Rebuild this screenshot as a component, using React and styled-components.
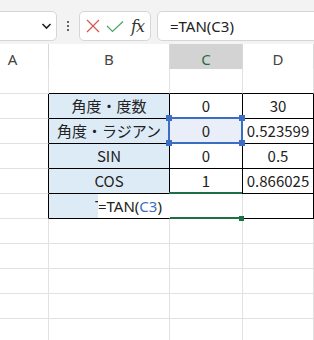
import React from "react";
import styled, { createGlobalStyle } from "styled-components";

const GlobalStyle = createGlobalStyle`
  html, body {
    margin: 0;
    padding: 0;
    background: #ffffff;
    overflow: hidden;
  }
  body {
    font-family: "Noto Sans CJK JP", "Noto Sans", sans-serif;
  }
`;

const COLS = [49, 121, 73, 71];

const Toolbar = styled.div`
  height: 44px;
  background: #f3f3f3;
  display: flex;
  align-items: flex-start;
  padding-top: 11px;
  box-sizing: border-box;
`;

const NameBox = styled.div`
  width: 62px;
  height: 30px;
  margin-left: -5px;
  box-sizing: border-box;
  background: #fff;
  border: 1px solid #d6d6d6;
  border-radius: 5px;
  display: flex;
  align-items: center;
  justify-content: flex-end;
  padding-right: 4px;
`;

const Dots = styled.div`
  width: 22px;
  height: 30px;
  display: flex;
  flex-direction: column;
  align-items: center;
  justify-content: center;
  gap: 2px;
  span {
    width: 2px;
    height: 2px;
    background: #333;
    border-radius: 1px;
  }
`;

const FxBox = styled.div`
  width: 72px;
  height: 30px;
  box-sizing: border-box;
  background: #fff;
  border: 1px solid #d6d6d6;
  border-radius: 5px;
  display: flex;
  align-items: center;
  padding-left: 5px;
  gap: 5px;
`;

const FxLabel = styled.span`
  font-family: "DejaVu Serif", "Liberation Serif", serif;
  font-style: italic;
  font-size: 16px;
  color: #333;
  margin-left: 2px;
  letter-spacing: -1px;
`;

const FormulaBox = styled.div`
  flex: 1;
  height: 30px;
  margin-left: 6px;
  margin-right: -10px;
  box-sizing: border-box;
  background: #fff;
  border: 1px solid #d6d6d6;
  border-radius: 5px;
  display: flex;
  align-items: center;
  padding-left: 12px;
  font-family: "Noto Sans", sans-serif;
  font-size: 15px;
  color: #222;
`;

const Sheet = styled.div`
  display: grid;
  grid-template-columns: ${COLS.map((c) => c + "px").join(" ")};
  grid-auto-rows: 25px;
`;

const Head = styled.div`
  height: 30px;
  box-sizing: border-box;
  border-right: 1px solid #d8d8d8;
  border-bottom: ${({ $active }) => ($active ? "2px solid #1e6f45" : "1px solid #c8c8c8")};
  background: ${({ $active }) => ($active ? "#d3d3d3" : "#fff")};
  color: ${({ $active }) => ($active ? "#1e6f45" : "#444")};
  display: flex;
  align-items: center;
  justify-content: center;
  font-family: "Noto Sans", sans-serif;
  font-size: 15px;
  padding-top: ${({ $active }) => ($active ? "1px" : "0")};
  padding-right: ${({ $shift }) => ($shift ? "23px" : "0")};
`;

const Cell = styled.div`
  position: relative;
  z-index: ${({ $raised }) => ($raised ? 2 : "auto")};
  box-sizing: border-box;
  border-right: 1px solid ${({ $edgeRight }) => ($edgeRight ? "#000" : "#e1e1e1")};
  border-bottom: 1px solid ${({ $edgeBottom }) => ($edgeBottom ? "#000" : "#e1e1e1")};
  background: ${({ $fill }) => $fill || "#fff"};
  display: flex;
  align-items: center;
  justify-content: center;
  font-size: 15px;
  color: #222;
  white-space: nowrap;
  padding-bottom: 1px;
`;

const RefFrame = styled.div`
  position: absolute;
  left: -2px;
  top: -2px;
  right: -1px;
  bottom: -1px;
  border: 2px solid #3b6ec2;
  pointer-events: none;
`;

const Handle = styled.span`
  position: absolute;
  width: 6px;
  height: 6px;
  background: #3b6ec2;
  ${({ $v }) => ($v === "t" ? "top: -4px;" : "bottom: -4px;")}
  ${({ $h }) => ($h === "l" ? "left: -4px;" : "right: -4px;")}
`;

const ActiveLine = styled.div`
  position: absolute;
  left: -1px;
  right: 0;
  height: 2px;
  background: #1e6f45;
  ${({ $top }) => ($top ? "top: -2px;" : "bottom: -1px;")}
`;

const FillHandle = styled.span`
  position: absolute;
  right: -2px;
  bottom: -3px;
  width: 5px;
  height: 5px;
  background: #1e6f45;
`;

const EditText = styled.div`
  position: absolute;
  right: 100%;
  top: 0;
  bottom: 0;
  width: 72px;
  background: #fff;
  display: flex;
  align-items: center;
  font-size: 15px;
  color: #222;
  font-family: "Noto Sans", sans-serif;
  padding-bottom: 1px;
  box-sizing: border-box;
  span {
    color: #3b6ec2;
  }
`;

const BLUE = "#ddebf7";

const rows = [
  ["角度・度数", "0", "30"],
  ["角度・ラジアン", "0", "0.523599"],
  ["SIN", "0", "0.5"],
  ["COS", "1", "0.866025"],
  ["TAN", "", ""],
];

const Chevron = () => (
  <svg width="11" height="8" viewBox="0 0 11 8">
    <path d="M1.5 2 L5.5 6 L9.5 2" fill="none" stroke="#222" strokeWidth="1.6" />
  </svg>
);

const Cross = () => (
  <svg width="16" height="16" viewBox="0 0 16 16">
    <path d="M2 2 L14 14 M14 2 L2 14" stroke="#d9534f" strokeWidth="1.2" />
  </svg>
);

const Check = () => (
  <svg width="18" height="13" viewBox="0 0 18 13">
    <path d="M1 6 L6.5 11.5 L17 1.5" fill="none" stroke="#4aa564" strokeWidth="1.2" />
  </svg>
);

const App = () => {
  return (
    <>
      <GlobalStyle />
      <Toolbar>
        <NameBox>
          <Chevron />
        </NameBox>
        <Dots>
          <span />
          <span />
          <span />
        </Dots>
        <FxBox>
          <Cross />
          <Check />
          <FxLabel>fx</FxLabel>
        </FxBox>
        <FormulaBox>=TAN(C3)</FormulaBox>
      </Toolbar>
      <Sheet>
        <Head $shift>A</Head>
        <Head>B</Head>
        <Head $active>C</Head>
        <Head>D</Head>

        <Cell />
        <Cell $edgeBottom />
        <Cell $edgeBottom />
        <Cell $edgeBottom />

        {rows.map(([label, c, d], i) => {
          const isTan = label === "TAN";
          return (
            <React.Fragment key={label}>
              <Cell $edgeRight />
              <Cell $fill={BLUE} $edgeRight $edgeBottom>
                {label}
              </Cell>
              <Cell
                $fill={i === 1 ? "#e9eef8" : "#fff"}
                $edgeRight={!isTan}
                $edgeBottom
                $raised={i === 1 || isTan}
              >
                {c}
                {i === 1 && (
                  <RefFrame>
                    <Handle $v="t" $h="l" />
                    <Handle $v="t" $h="r" />
                    <Handle $v="b" $h="l" />
                    <Handle $v="b" $h="r" />
                  </RefFrame>
                )}
                {isTan && (
                  <>
                    <ActiveLine $top />
                    <ActiveLine />
                    <FillHandle />
                    <EditText>
                      =TAN(<span>C3</span>)
                    </EditText>
                  </>
                )}
              </Cell>
              <Cell $edgeRight $edgeBottom>
                {d}
              </Cell>
            </React.Fragment>
          );
        })}

        {Array.from({ length: 5 }).map((_, r) =>
          COLS.map((_, c) => <Cell key={`e${r}-${c}`} />)
        )}
      </Sheet>
    </>
  );
};

export default App;
